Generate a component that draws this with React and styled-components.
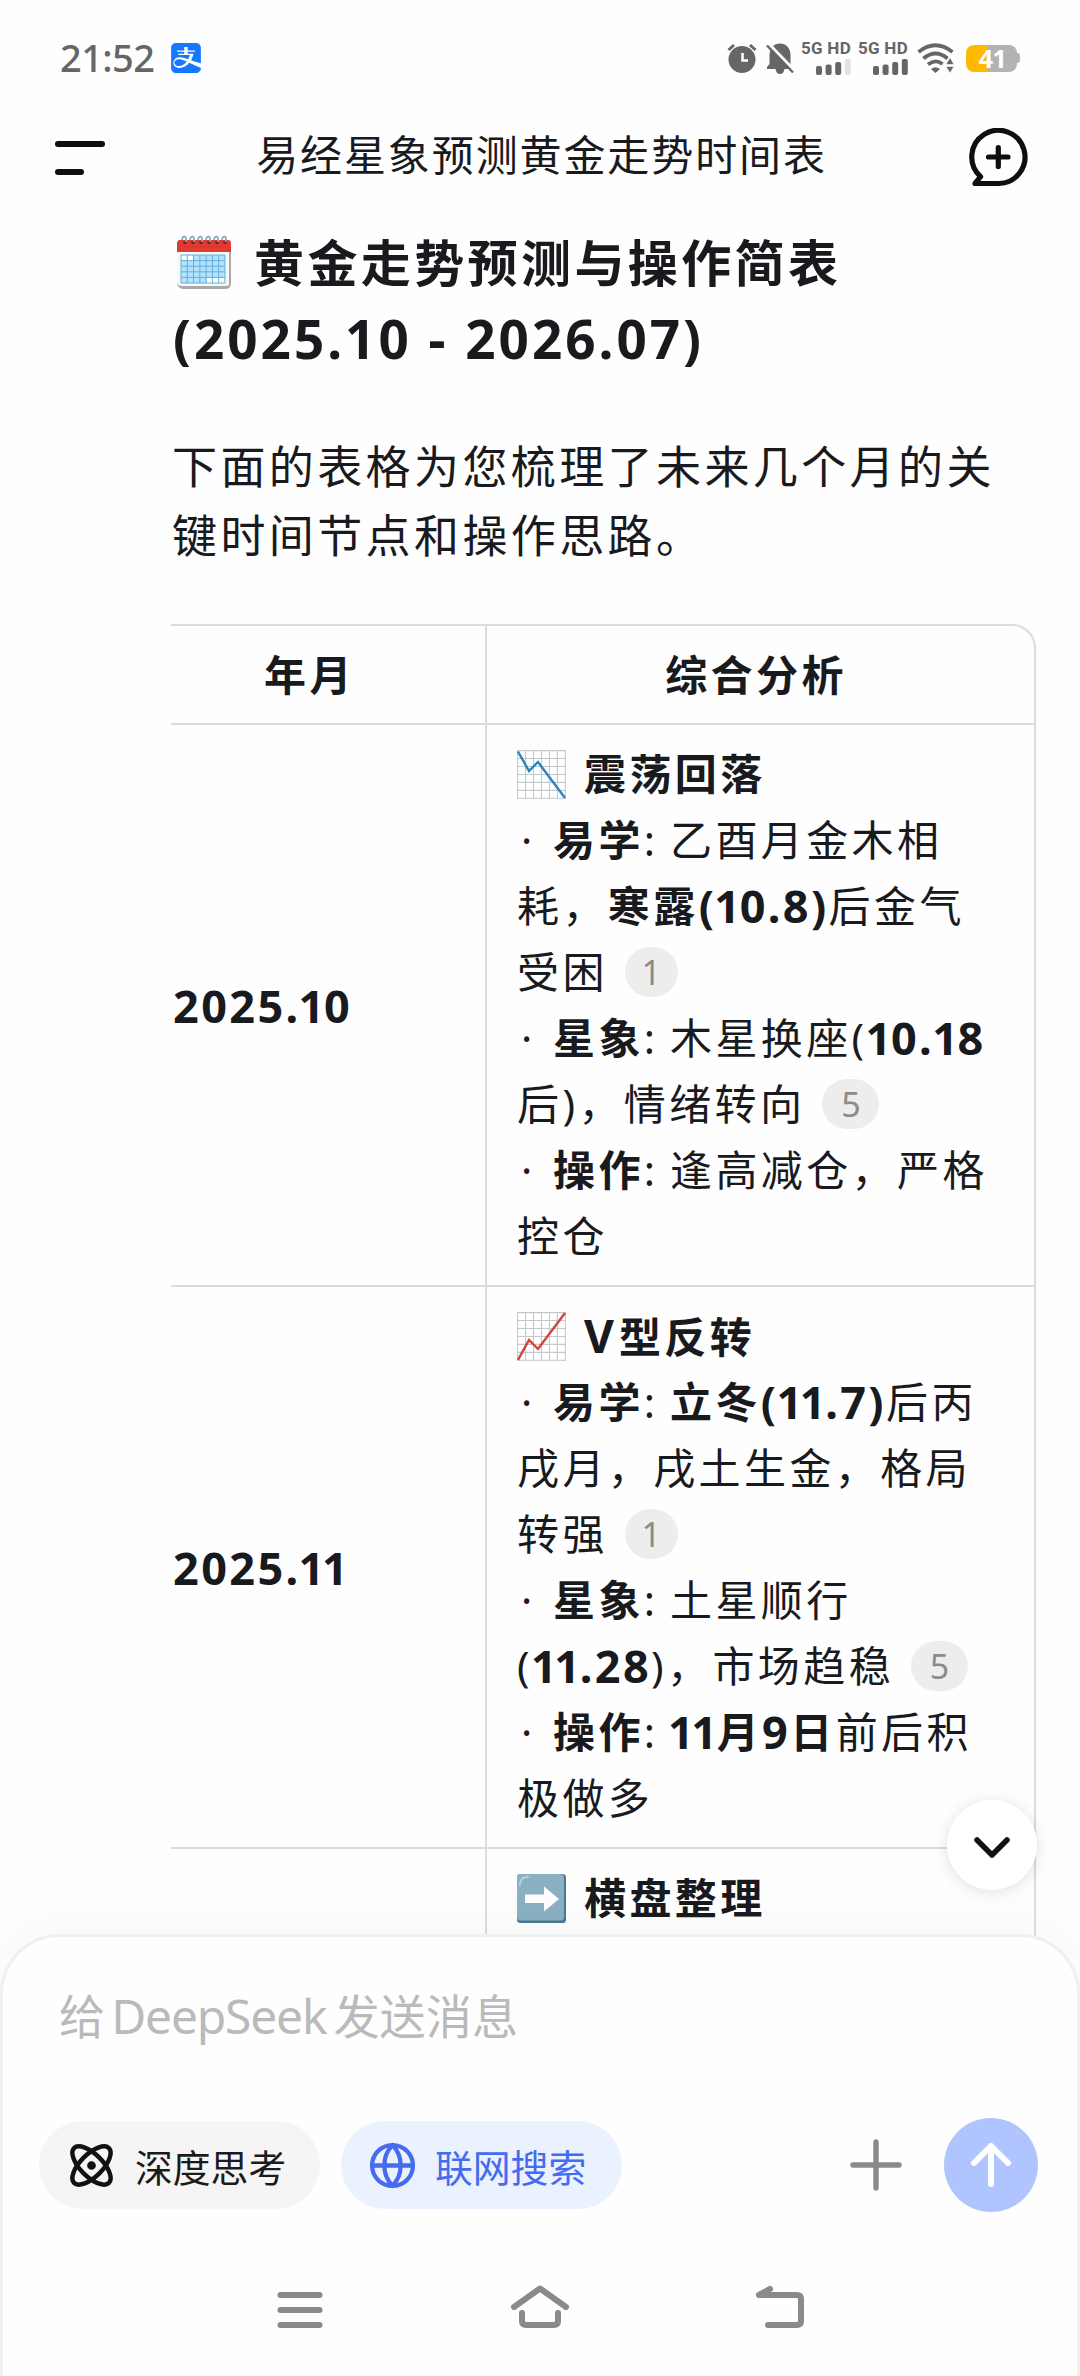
import React from "react";
import styled, { createGlobalStyle } from "styled-components";
import { Atom, Globe } from "lucide-react";
import { SiAlipay } from "react-icons/si";

const GlobalStyle = createGlobalStyle`
  * {
    box-sizing: border-box;
  }
  body {
    margin: 0;
    background: #fefefe;
    color: #191a1e;
    font-family: "Noto Sans", "Noto Sans CJK SC", sans-serif;
  }
`;

// Table content
const rows = [
  {
    month: "2025.10",
    icon: "down",
    title: "震荡回落",
    lines: [
      [{ label: "易学" }, { text: "乙酉月金木相" }],
      [{ text: "耗，" }, { bold: "寒露" }, { num: "(10.8)" }, { text: "后金气" }],
      [{ text: "受困" }, { cite: "1" }],
      [{ label: "星象" }, { text: "木星换座(" }, { num: "10.18" }],
      [{ text: "后)，情绪转向" }, { cite: "5" }],
      [{ label: "操作" }, { text: "逢高减仓，严格" }],
      [{ text: "控仓" }],
    ],
  },
  {
    month: "2025.11",
    icon: "up",
    letter: "V",
    title: "型反转",
    lines: [
      [{ label: "易学" }, { bold: "立冬" }, { num: "(11.7)" }, { text: "后丙" }],
      [{ text: "戌月，戌土生金，格局" }],
      [{ text: "转强" }, { cite: "1" }],
      [{ label: "星象" }, { text: "土星顺行" }],
      [{ text: "(" }, { num: "11.28" }, { text: ")，市场趋稳" }, { cite: "5" }],
      [{ label: "操作" }, { num: "11" }, { bold: "月" }, { num: "9" }, { bold: "日" }, { text: "前后积" }],
      [{ text: "极做多" }],
    ],
  },
  { month: "", icon: "flat", title: "横盘整理", lines: [] },
];

export default function App() {
  return (
    <Screen>
      <GlobalStyle />
      <StatusBar>
        <Time>21:52</Time>
        <AlipayBadge>
          <SiAlipay size={30} />
        </AlipayBadge>
        <StatusIcons>
          <AlarmIcon />
          <BellOffIcon />
          <Signal level={3} />
          <Signal level={4} />
          <WifiIcon />
          <Battery>
            <BatteryBody>41</BatteryBody>
            <BatteryTip />
          </Battery>
        </StatusIcons>
      </StatusBar>
      <Header>
        <MenuButton>
          <MenuLine $width={50} />
          <MenuLine $width={29} />
        </MenuButton>
        <Title>易经星象预测黄金走势时间表</Title>
        <NewChatIcon />
      </Header>
      <Content>
        <Heading>
          <HeadingRow>
            <CalendarIcon />
            黄金走势预测与操作简表
          </HeadingRow>
          <HeadingRange>(2025.10 - 2026.07)</HeadingRange>
        </Heading>
        <Intro>
          下面的表格为您梳理了未来几个月的关
          <br />
          键时间节点和操作思路。
        </Intro>
        <TableFrame>
          <TableRow>
            <HeadCell>年月</HeadCell>
            <HeadCell>综合分析</HeadCell>
          </TableRow>
          {rows.map((row) => (
            <TableRow key={row.title}>
              <MonthCell>
                <Digits value={row.month} />
              </MonthCell>
              <Cell>
                <TitleLine>
                  <TrendIcon type={row.icon} />
                  <span>
                    {row.letter && <Letter>{row.letter}</Letter>}
                    {row.title}
                  </span>
                </TitleLine>
                {row.lines.map((line, i) => (
                  <Line key={i}>
                    {line.map((part, j) => (
                      <Part key={j} {...part} />
                    ))}
                  </Line>
                ))}
              </Cell>
            </TableRow>
          ))}
        </TableFrame>
      </Content>
      <ScrollButton>
        <svg width="40" height="30" viewBox="0 0 40 30" fill="none" stroke="#111" strokeWidth="5.5" strokeLinecap="round" strokeLinejoin="round">
          <path d="M5 7 L20 22 L35 7" />
        </svg>
      </ScrollButton>
      <Composer>
        <Placeholder>
          给<Brand>DeepSeek</Brand>发送消息
        </Placeholder>
        <Actions>
          <Chip>
            <Atom size={51} strokeWidth={2.1} color="#111" />
            深度思考
          </Chip>
          <Chip $active>
            <Globe size={49} strokeWidth={2.1} />
            联网搜索
          </Chip>
          <PlusIcon />
          <SendButton>
            <svg width="46" height="50" viewBox="0 0 46 50" fill="none" stroke="#fff" strokeWidth="6" strokeLinecap="round" strokeLinejoin="round">
              <path d="M23 44 V6 M6 23 L23 6 L40 23" />
            </svg>
          </SendButton>
        </Actions>
        <NavBar>
          <svg width="60" height="50" viewBox="0 0 60 50">
            <path d="M10.5 10 H49.5 M10.5 25 H49.5 M10.5 40 H49.5" />
          </svg>
          <svg width="60" height="50" viewBox="0 0 60 50">
            <path d="M4 22 L30 3.5 L56 22 M12 28 V36 Q12 40 16 40 H44 Q48 40 48 36 V28" />
          </svg>
          <svg width="60" height="50" viewBox="0 0 60 50">
            <path d="M20 4 L9 10 H47 Q51 10 51 14 V36 Q51 40 47 40 H18" />
          </svg>
        </NavBar>
      </Composer>
    </Screen>
  );
}

function Part({ label, text, bold, num, cite }) {
  if (label) {
    return (
      <>
        <Bullet>·</Bullet>
        <Label>
          <b>{label}</b>:
        </Label>
      </>
    );
  }
  if (cite) return <Cite $wide={cite !== "1"}>{cite}</Cite>;
  if (num) return <Digits value={num} />;
  if (bold) return <b>{bold}</b>;
  return <span>{text}</span>;
}

// Bold figures, with the 1 set tighter than the others
function Digits({ value }) {
  return (
    <Num>
      {value.split("").map((char, i) => (char === "1" ? <One key={i}>1</One> : char))}
    </Num>
  );
}

// Icons
function AlarmIcon() {
  return (
    <svg width="30" height="30" viewBox="0 0 30 30">
      <circle cx="15" cy="16.5" r="13.5" fill="#666" />
      <path d="M1.5 7 L7 2 M28.5 7 L23 2" stroke="#666" strokeWidth="3" />
      <path d="M15.5 10 V17.5 H21" fill="none" stroke="#fff" strokeWidth="2.6" />
    </svg>
  );
}

function BellOffIcon() {
  return (
    <svg width="28" height="31" viewBox="0 0 28 31">
      <path d="M3.5 13 C3.5 5 8 0.5 14 0.5 C20 0.5 24.5 5 24.5 12 V21 L27 26 H18.5 C18 29 16.5 31 14 31 C11.5 31 10 29 9.5 26 H1 V24 L3.5 21 Z" fill="#666" />
      <path d="M2 0 L28 27" stroke="#fefefe" strokeWidth="3" />
      <path d="M1 2.5 L27 29.5" stroke="#666" strokeWidth="2.4" />
    </svg>
  );
}

function Signal({ level }) {
  return (
    <SignalBox>
      <SignalText>5G HD</SignalText>
      <svg width="35" height="16" viewBox="0 0 35 16">
        {[0, 1, 2, 3].map((i) => (
          <rect
            key={i}
            x={i * 9.6}
            y={[7, 5.5, 3, 0][i]}
            width="6"
            height={16 - [7, 5.5, 3, 0][i]}
            rx="2"
            fill={i < level ? "#666" : "#e2e2e2"}
          />
        ))}
      </svg>
    </SignalBox>
  );
}

function WifiIcon() {
  return (
    <svg width="37" height="30" viewBox="0 0 37 30">
      <g fill="none" stroke="#666" strokeWidth="3.8">
        <path d="M1.5 9 Q18.5 -4.5 35.5 9" />
        <path d="M6.5 15.5 Q18.5 5.5 30.5 15.5" />
        <path d="M11 21.5 Q18.5 15.5 25.5 21" />
      </g>
      <path d="M14 26 Q18.5 22.5 23 26 L18.5 30 Z" fill="#666" />
      <path d="M33 14.5 L37 21.5 H29 Z M33 30 L37 23.5 H29 Z" fill="#666" stroke="#fefefe" strokeWidth="0.6" />
    </svg>
  );
}

function NewChatIcon() {
  return (
    <svg width="60" height="60" viewBox="0 0 60 60" fill="none" stroke="#0f0f0f" strokeWidth="5.2" strokeLinecap="round" strokeLinejoin="round">
      <path d="M30.3 55.5 H7 L12.6 48.7 A26.6 26.6 0 1 1 30.3 55.5 Z" />
      <path d="M30.3 19.5 V38.5 M20.5 29 H40" />
    </svg>
  );
}

function PlusIcon() {
  return (
    <PlusSvg width="52" height="52" viewBox="0 0 52 52">
      <path d="M26 3 V49 M3 26 H49" stroke="#8a8a8a" strokeWidth="5.4" strokeLinecap="round" />
    </PlusSvg>
  );
}

function CalendarIcon() {
  const steps = [0, 1, 2, 3, 4, 5];
  return (
    <svg width="56" height="56" viewBox="0 0 56 56">
      <path d="M1 14 H55 V48 Q55 54 49 54 H7 Q1 53 1 47 Z" fill="#a9a9ac" />
      <path d="M1 14 H53 V49 Q53 51 51 51 H5 Q1 50 1 47 Z" fill="#f7f7f8" />
      <path d="M1 17 V8 Q1 5 4 5 H52 Q55 5 55 8 V17 Z" fill="#df3b32" />
      <rect x="5" y="20" width="44" height="28" fill="#b4e2fb" />
      <rect x="5" y="20" width="12" height="5" fill="#fff" />
      <rect x="31" y="43" width="18" height="5" fill="#fff" />
      <g stroke="#62aede" strokeWidth="1">
        {steps.map((i) => (
          <path key={i} d={`M5 ${20 + i * 5.6} H49`} />
        ))}
        {[...steps, 6, 7].map((i) => (
          <path key={i} d={`M${5 + i * 6.28} 20 V48`} />
        ))}
      </g>
      {steps.map((i) => (
        <g key={i}>
          <circle cx={9 + i * 8} cy="7.5" r="1.8" fill="#7d1d1a" />
          <path d={`M${6 + i * 8} 5 Q${6.5 + i * 8} 1 ${9 + i * 8} 1.6 Q${11 + i * 8} 3 ${9.5 + i * 8} 7`} fill="none" stroke="#7fa9b8" strokeWidth="1.7" />
        </g>
      ))}
    </svg>
  );
}

function TrendIcon({ type }) {
  if (type === "flat") {
    return (
      <svg width="49" height="49" viewBox="0 0 49 49">
        <rect width="49" height="49" rx="3.5" fill="#477a90" />
        <rect width="47" height="46.5" rx="3.5" fill="#8bb0c3" />
        <path d="M3 11 Q3 3 11 3" fill="none" stroke="#b5d0dc" strokeWidth="2" strokeLinecap="round" />
        <path d="M8 20.5 H27 V12.5 L42 25 L27 37.5 V29 H8 Z" fill="#fff" />
      </svg>
    );
  }
  const grid = [0, 1, 2, 3, 4, 5, 6];
  return (
    <svg width="49" height="49" viewBox="0 0 49 49">
      <rect x="0.5" y="0.5" width="48" height="48" fill="#fff" />
      <g stroke="#c3c9cd" strokeWidth="1.1">
        {grid.map((i) => (
          <path key={i} d={`M${0.6 + i * 7.95} 0 V49 M0 ${0.6 + i * 7.95} H49`} />
        ))}
      </g>
      {type === "down" ? (
        <path d="M1 1.5 L12 21 L21 12 L48 48" fill="none" stroke="#2b84bb" strokeWidth="2.4" />
      ) : (
        <path d="M1 48 L12 28 L21 37 L48 1" fill="none" stroke="#cf4440" strokeWidth="2.4" />
      )}
    </svg>
  );
}

const Screen = styled.div`
  position: relative;
  display: flex;
  flex-direction: column;
  width: 1080px;
  height: 2376px;
  overflow: hidden;
  background: #fefefe;
`;

const StatusBar = styled.div`
  display: flex;
  align-items: center;
  height: 116px;
  padding: 0 60px 0 60px;
  color: #666;
`;
const Time = styled.div`
  width: 111px;
  padding-bottom: 3px;
  font-family: "Noto Sans", sans-serif;
  font-size: 38px;
  font-weight: 500;
  letter-spacing: -0.6px;
`;
const AlipayBadge = styled.div`
  display: flex;
  color: #1677ff;
`;
const StatusIcons = styled.div`
  display: flex;
  align-items: center;
  gap: 9px;
  margin-left: auto;
`;
const SignalBox = styled.div`
  display: flex;
  flex-direction: column;
  align-items: flex-end;
  width: 48px;
  height: 34px;
`;
const SignalText = styled.div`
  height: 18px;
  font-family: Roboto, sans-serif;
  font-size: 17px;
  font-weight: 700;
  line-height: 14px;
  letter-spacing: 0.3px;
  white-space: nowrap;
`;
const Battery = styled.div`
  display: flex;
  align-items: center;
  margin-left: 3px;
`;
const BatteryBody = styled.div`
  width: 51px;
  height: 27px;
  padding-left: 2px;
  border-radius: 8px;
  background: linear-gradient(90deg, #ffb900 21px, #b3b3b3 21px);
  color: #fff;
  font-size: 25px;
  font-weight: 700;
  line-height: 27px;
  letter-spacing: -0.5px;
  text-align: center;
`;
const BatteryTip = styled.div`
  width: 3px;
  height: 10px;
  border-radius: 0 3px 3px 0;
  background: #b3b3b3;
`;

const Header = styled.header`
  display: flex;
  align-items: center;
  justify-content: space-between;
  height: 84px;
  padding: 0 52px 0 55px;
`;
const MenuButton = styled.div`
  display: flex;
  flex-direction: column;
  gap: 22px;
  width: 60px;
`;
const MenuLine = styled.div`
  width: ${(props) => props.$width}px;
  height: 6px;
  border-radius: 3px;
  background: #0f0f0f;
`;
const Title = styled.h1`
  margin: 0;
  padding-bottom: 6px;
  font-size: 42px;
  font-weight: 400;
  letter-spacing: 1.9px;
  line-height: 60px;
`;

const Content = styled.main`
  flex: 1;
  min-height: 0;
  padding: 25px 44px 0 171px;
  overflow: hidden;
`;
const Heading = styled.h2`
  margin: 0 0 55px;
  font-size: 50px;
  font-weight: 700;
  line-height: 76px;
  letter-spacing: 3.4px;
  white-space: nowrap;
`;
const HeadingRow = styled.div`
  display: flex;
  align-items: center;
  gap: 22px;
  padding-left: 5px;
`;
const HeadingRange = styled.div`
  padding-left: 2px;
  font-size: 53px;
  letter-spacing: 3px;
`;
const Intro = styled.p`
  margin: 0 0 54px;
  padding-left: 1px;
  font-size: 45px;
  line-height: 69px;
  letter-spacing: 3.4px;
  white-space: nowrap;
`;

const TableFrame = styled.div`
  overflow: hidden;
  border: 2px solid #dcdcdc;
  border-left: none;
  border-radius: 0 24px 0 0;
`;
const TableRow = styled.div`
  display: grid;
  grid-template-columns: 314px 1fr;
  border-bottom: 2px solid #dcdcdc;
`;
const HeadCell = styled.div`
  height: 97px;
  font-size: 42px;
  font-weight: 700;
  line-height: 97px;
  letter-spacing: 3.4px;
  text-align: center;
  &:first-child {
    padding-right: 37px;
  }
  & + & {
    border-left: 2px solid #dcdcdc;
    padding-right: 9px;
  }
`;
const MonthCell = styled.div`
  display: flex;
  align-items: center;
  padding-left: 2px;
`;
const Cell = styled.div`
  padding: 16px 0 16px 30px;
  border-left: 2px solid #dcdcdc;
  font-size: 42px;
  letter-spacing: 3.4px;
  line-height: 66px;
  white-space: nowrap;
`;
const Line = styled.div`
  display: flex;
  align-items: center;
  height: 66px;
`;
const TitleLine = styled(Line)`
  gap: 18px;
  font-weight: 700;
`;
const Letter = styled.span`
  font-size: 46px;
  letter-spacing: 5px;
`;
const Bullet = styled.span`
  width: 36px;
  padding-left: 4px;
`;
const Label = styled.span`
  width: 117px;
`;
const Num = styled.b`
  font-size: 45px;
  letter-spacing: 2.4px;
`;
const One = styled.span`
  margin-left: -2px;
  letter-spacing: -0.4px;
`;
const Cite = styled.span`
  display: flex;
  align-items: center;
  justify-content: center;
  width: ${(props) => (props.$wide ? 57 : 53)}px;
  height: 50px;
  margin-left: 17px;
  border-radius: 25px;
  background: #ededed;
  color: #8c8c8c;
  font-size: 34px;
  letter-spacing: 0;
`;

const ScrollButton = styled.div`
  position: absolute;
  top: 1800px;
  left: 947px;
  display: flex;
  align-items: center;
  justify-content: center;
  width: 90px;
  height: 90px;
  border-radius: 50%;
  background: #fff;
  box-shadow: 0 2px 16px rgba(0, 0, 0, 0.12);
  padding-top: 6px;
`;

const Composer = styled.footer`
  position: relative;
  display: flex;
  flex-direction: column;
  height: 442px;
  /* table stays visible behind the rounded corners */
  margin-top: -60px;
  flex: 0 0 442px;
  border: 3px solid #f0f0f0;
  border-bottom: none;
  border-radius: 60px 60px 0 0;
  background: #fefefe;
  box-shadow: 0 0 60px rgba(0, 0, 0, 0.04);
`;
const Placeholder = styled.div`
  padding: 46px 0 0 56px;
  color: #bababa;
  font-size: 46.2px;
  line-height: 66px;
  white-space: nowrap;
`;
const Brand = styled.span`
  margin: 0 7px 0 6px;
  font-size: 48px;
  letter-spacing: -1.2px;
`;
const Actions = styled.div`
  display: flex;
  align-items: center;
  margin-top: 67px;
  height: 96px;
  padding: 0 39px 0 36px;
`;
const Chip = styled.div`
  display: flex;
  align-items: center;
  gap: 18px;
  width: 281px;
  height: 88px;
  margin-right: 21px;
  padding-left: 27px;
  border-radius: 44px;
  background: ${(props) => (props.$active ? "#ebf2ff" : "#f5f5f5")};
  color: ${(props) => (props.$active ? "#456bee" : "#1b1b1b")};
  font-size: 37.8px;
  white-space: nowrap;
`;
const PlusSvg = styled.svg`
  margin-left: auto;
  margin-right: 42px;
`;
const SendButton = styled.div`
  display: flex;
  align-items: center;
  justify-content: center;
  width: 94px;
  height: 94px;
  border-radius: 50%;
  background: #b0c5ff;
`;
const NavBar = styled.div`
  display: flex;
  justify-content: center;
  gap: 180px;
  margin-top: 72px;
  svg {
    fill: none;
    stroke: #8a8a8a;
    stroke-width: 6px;
    stroke-linecap: round;
    stroke-linejoin: round;
  }
`;
